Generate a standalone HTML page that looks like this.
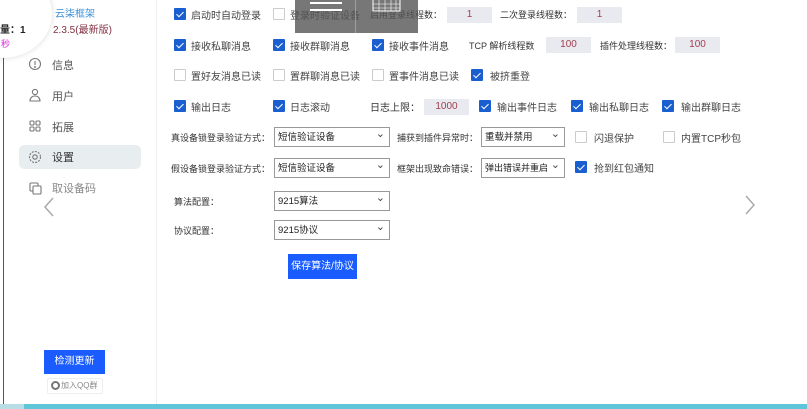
<!DOCTYPE html>
<html><head><meta charset="utf-8"><style>
*{margin:0;padding:0;box-sizing:border-box}
body{width:807px;height:409px;background:#fff;position:relative;overflow:hidden;font-family:"Liberation Sans","Noto Sans CJK SC",sans-serif;font-size:10px;color:#444}
.a{position:absolute;white-space:nowrap}
.cb{position:absolute;width:12px;height:12px;border:1px solid #ccc;background:#fff;border-radius:1px}
.cb.on{background:#1a5fd0;border-color:#1a5fd0}
.cb.on:after{content:"";position:absolute;left:3px;top:1px;width:3px;height:6px;border:solid #fff;border-width:0 1.5px 1.5px 0;transform:rotate(45deg)}
.inp{position:absolute;height:16px;background:#e9e9f0;color:#a04050;text-align:center;line-height:16px;font-size:10px}
.sel{position:absolute;height:20px;border:1px solid #999;background:#fff;line-height:19px;padding-left:3px;font-size:9.5px;color:#222}
.sel:after{content:"⌄";position:absolute;right:4px;top:-3px;font-size:11px;color:#444}
.mi{position:absolute;left:30px;font-size:11px;color:#555}
.lb{font-size:9px;color:#333}
</style></head><body>
<div class="a" style="left:3px;top:0;width:1px;height:405px;background:#555"></div>
<div class="a" style="left:156px;top:0;width:1px;height:405px;background:#eee"></div>
<div class="a" style="left:-48px;top:-30px;width:100px;height:88px;border-radius:50%;background:#fff;box-shadow:0 0 6px rgba(0,0,0,.15)"></div>
<div class="a" style="left:0;top:21px;font-size:10px;font-weight:bold;color:#222">量：1</div>
<div class="a" style="left:1px;top:37px;font-size:9px;color:#e020e0">秒</div>
<div class="a" style="left:55px;top:5px;font-size:10px;color:#3a8fd8">云柒框架</div>
<div class="a" style="left:53px;top:21px;font-size:10px;color:#803040">2.3.5(最新版)</div>
<div class="a" style="left:19px;top:145px;width:122px;height:24px;background:#e8eeef;border-radius:5px"></div>
<svg class="a" style="left:28px;top:57px" width="14" height="140" fill="none" stroke="#777" stroke-width="1.1">
<circle cx="7" cy="7" r="5.5"/><line x1="7" y1="4" x2="7" y2="8"/><circle cx="7" cy="10" r=".4"/>
<circle cx="7" cy="35" r="2.6"/><path d="M2 44c0-3 2-5 5-5s5 2 5 5z"/>
<rect x="2" y="64" width="4" height="4" rx="1"/><rect x="8" y="64" width="4" height="4" rx="1"/><rect x="2" y="70" width="4" height="4" rx="1"/><rect x="8" y="70" width="4" height="4" rx="1"/>
<circle cx="7" cy="100" r="2.2"/><circle cx="7" cy="100" r="5.5" stroke-dasharray="2 1.2"/>
<rect x="2" y="126" width="8" height="8" rx="1"/><rect x="5" y="129" width="8" height="8" rx="1" fill="#fff"/>
</svg>
<div class="mi" style="left:52px;top:57px">信息</div>
<div class="mi" style="left:52px;top:88px">用户</div>
<div class="mi" style="left:52px;top:119px">拓展</div>
<div class="mi" style="left:52px;top:149px;color:#333">设置</div>
<div class="mi" style="left:52px;top:180px;color:#888">取设备码</div>
<svg class="a" style="left:43px;top:197px" width="12" height="20" fill="none" stroke="#aaa" stroke-width="1.5"><path d="M10 1L2 10l8 9"/></svg>
<svg class="a" style="left:744px;top:195px" width="12" height="20" fill="none" stroke="#aaa" stroke-width="1.5"><path d="M2 1l8 9-8 9"/></svg>
<div class="a" style="left:44px;top:350px;width:61px;height:24px;background:#1a5cff;color:#fff;text-align:center;line-height:24px;font-size:10px">检测更新</div>
<div class="a" style="left:47px;top:378px;width:56px;height:16px;border:1px solid #eee;border-radius:2px;font-size:8px;color:#888;line-height:14px;padding-left:13px">加入QQ群</div>
<div class="a" style="left:51px;top:381px;width:9px;height:9px;border-radius:50%;border:2.5px solid #777"></div>
<div class="a" style="left:0;top:404px;width:807px;height:5px;background:#5ec6d8"></div>
<div class="a" style="left:0;top:404px;width:24px;height:5px;background:#b8dde5"></div>

<div class="cb on" style="left:174px;top:8px"></div><div class="a" style="left:191px;top:7px">启动时自动登录</div>
<div class="cb" style="left:273px;top:8px"></div><div class="a" style="left:290px;top:7px">登录时验证设备</div>
<div class="a lb" style="left:370px;top:8px">启用登录线程数：</div><div class="inp" style="left:447px;top:7px;width:45px">1</div>
<div class="a lb" style="left:500px;top:8px">二次登录线程数：</div><div class="inp" style="left:577px;top:7px;width:45px">1</div>

<div class="cb on" style="left:174px;top:39px"></div><div class="a" style="left:191px;top:38px">接收私聊消息</div>
<div class="cb on" style="left:273px;top:39px"></div><div class="a" style="left:290px;top:38px">接收群聊消息</div>
<div class="cb on" style="left:372px;top:39px"></div><div class="a" style="left:389px;top:38px">接收事件消息</div>
<div class="a lb" style="left:469px;top:39px">TCP 解析线程数</div><div class="inp" style="left:546px;top:37px;width:45px">100</div>
<div class="a lb" style="left:600px;top:39px">插件处理线程数：</div><div class="inp" style="left:675px;top:37px;width:45px">100</div>

<div class="cb" style="left:174px;top:69px"></div><div class="a" style="left:191px;top:68px">置好友消息已读</div>
<div class="cb" style="left:273px;top:69px"></div><div class="a" style="left:290px;top:68px">置群聊消息已读</div>
<div class="cb" style="left:372px;top:69px"></div><div class="a" style="left:389px;top:68px">置事件消息已读</div>
<div class="cb on" style="left:471px;top:69px"></div><div class="a" style="left:490px;top:68px">被挤重登</div>

<div class="cb on" style="left:174px;top:100px"></div><div class="a" style="left:191px;top:99px">输出日志</div>
<div class="cb on" style="left:273px;top:100px"></div><div class="a" style="left:290px;top:99px">日志滚动</div>
<div class="a" style="left:370px;top:99px;color:#333">日志上限：</div><div class="inp" style="left:424px;top:99px;width:45px">1000</div>
<div class="cb on" style="left:479px;top:100px"></div><div class="a" style="left:497px;top:99px">输出事件日志</div>
<div class="cb on" style="left:571px;top:100px"></div><div class="a" style="left:589px;top:99px">输出私聊日志</div>
<div class="cb on" style="left:662px;top:100px"></div><div class="a" style="left:681px;top:99px">输出群聊日志</div>

<div class="a lb" style="left:171px;top:131px">真设备锁登录验证方式：</div>
<div class="sel" style="left:274px;top:127px;width:116px">短信验证设备</div>
<div class="a lb" style="left:397px;top:131px">捕获到插件异常时：</div>
<div class="sel" style="left:481px;top:127px;width:84px">重载并禁用</div>
<div class="cb" style="left:575px;top:131px"></div><div class="a" style="left:594px;top:130px">闪退保护</div>
<div class="cb" style="left:663px;top:131px"></div><div class="a" style="left:681px;top:130px">内置TCP秒包</div>

<div class="a lb" style="left:171px;top:162px">假设备锁登录验证方式：</div>
<div class="sel" style="left:274px;top:158px;width:116px">短信验证设备</div>
<div class="a lb" style="left:397px;top:162px">框架出现致命错误：</div>
<div class="sel" style="left:481px;top:158px;width:84px;font-size:9px">弹出错误并重启</div>
<div class="cb on" style="left:575px;top:161px"></div><div class="a" style="left:594px;top:160px">抢到红包通知</div>

<div class="a lb" style="left:174px;top:195px">算法配置：</div>
<div class="sel" style="left:274px;top:191px;width:116px">9215算法</div>
<div class="a lb" style="left:174px;top:224px">协议配置：</div>
<div class="sel" style="left:274px;top:220px;width:116px">9215协议</div>
<div class="a" style="left:288px;top:254px;width:69px;height:25px;background:#1a5cff;color:#fff;text-align:center;line-height:25px;font-size:10px">保存算法/协议</div>

<div class="a" style="left:295px;top:0;width:123px;height:33px;background:rgba(85,85,85,.8)"></div>
<div class="a" style="left:355px;top:0;width:1px;height:33px;background:rgba(200,200,200,.5)"></div>
<div class="a" style="left:310px;top:2px;width:32px;height:2px;background:#fff"></div>
<div class="a" style="left:310px;top:9px;width:32px;height:2px;background:#fff"></div>
<svg class="a" style="left:372px;top:0" width="30" height="12" fill="none" stroke="#fff" stroke-width="1"><path d="M1 0v11h27V0"/><path d="M1 4h27M1 8h27M7 0v11M13 0v11M19 0v11M24 0v11" stroke-width=".6"/></svg>
</body></html>
